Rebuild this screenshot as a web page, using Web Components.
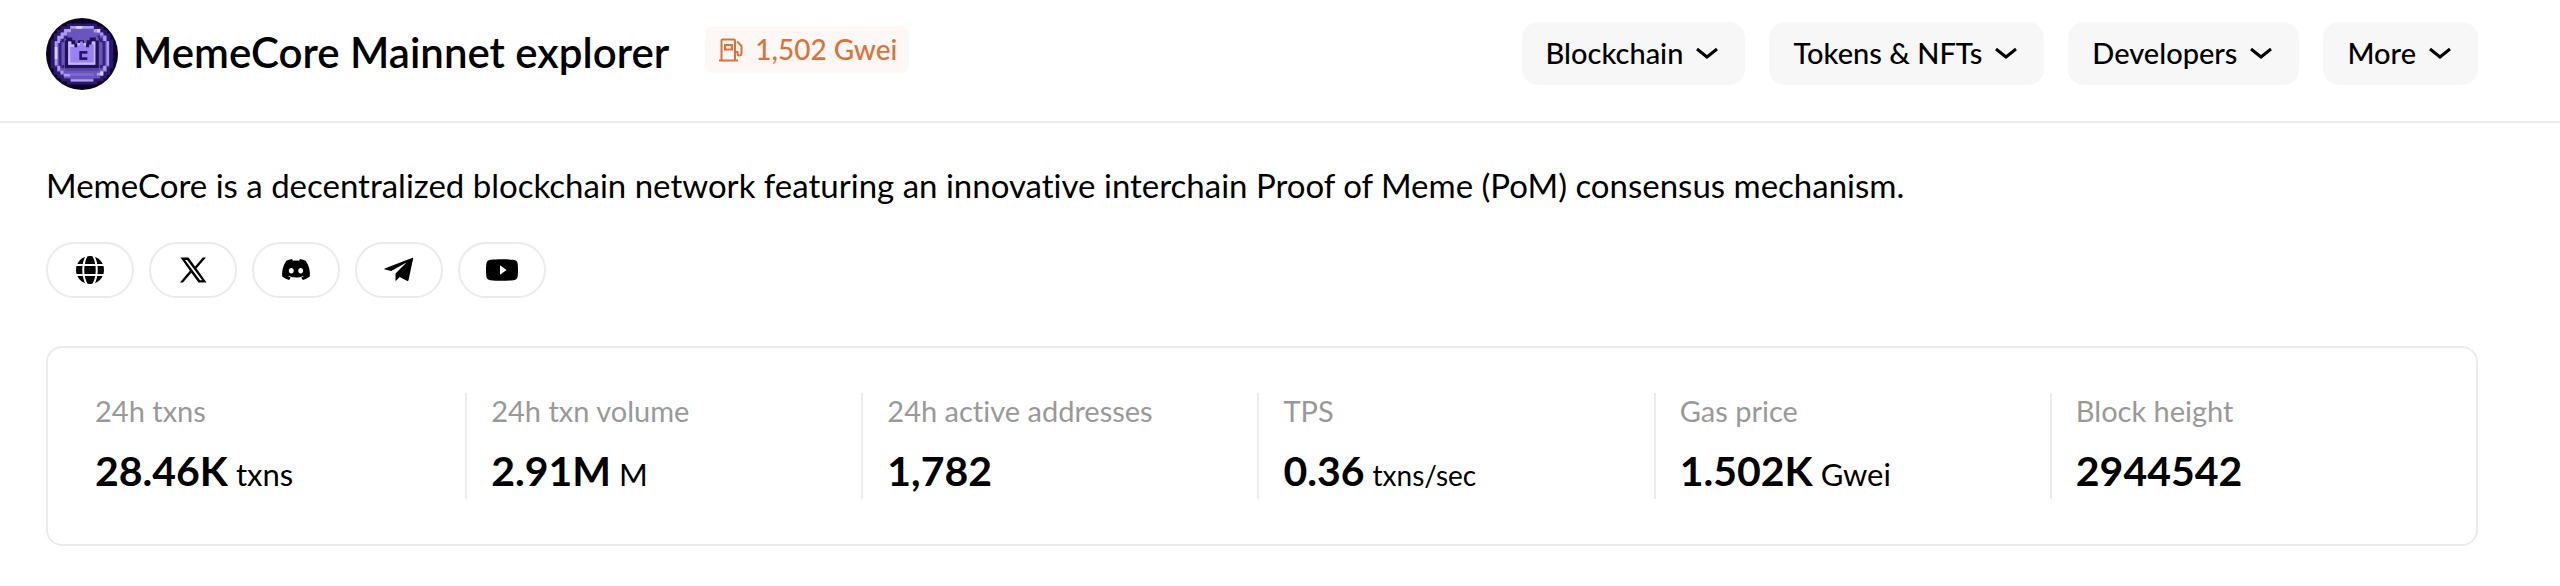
<!DOCTYPE html>
<html lang="en">
<head>
<meta charset="utf-8">
<meta name="viewport" content="width=device-width, initial-scale=1">
<title>MemeCore Mainnet explorer</title>
<style>
  body {
    margin: 0;
    background: #fff;
    color: #000;
    font-family: Lato, "Liberation Sans", sans-serif;
    font-variant-ligatures: none;
  }
</style>
</head>
<body>

<explorer-header>
  <chain-logo slot="brand"></chain-logo>
  <span slot="title">MemeCore Mainnet explorer</span>
  <gas-badge slot="brand-extra">1,502 Gwei</gas-badge>
  <nav-menu>Blockchain</nav-menu>
  <nav-menu>Tokens &amp; NFTs</nav-menu>
  <nav-menu>Developers</nav-menu>
  <nav-menu>More</nav-menu>
</explorer-header>

<chain-overview>
  <span slot="description">MemeCore is a decentralized blockchain network featuring an innovative interchain Proof of Meme (PoM) consensus mechanism.</span>
  <social-link slot="links" icon="globe" label="Website"></social-link>
  <social-link slot="links" icon="x" label="X"></social-link>
  <social-link slot="links" icon="discord" label="Discord"></social-link>
  <social-link slot="links" icon="telegram" label="Telegram"></social-link>
  <social-link slot="links" icon="youtube" label="YouTube"></social-link>
  <stat-card label="24h txns" unit="txns">28.46K</stat-card>
  <stat-card label="24h txn volume" unit="M">2.91M</stat-card>
  <stat-card label="24h active addresses">1,782</stat-card>
  <stat-card label="TPS" unit="txns/sec" small-unit>0.36</stat-card>
  <stat-card label="Gas price" unit="Gwei">1.502K</stat-card>
  <stat-card label="Block height">2944542</stat-card>
</chain-overview>

<script>
class ExplorerHeader extends HTMLElement {
  constructor() {
    super();
    this.attachShadow({ mode: "open" });
  }

  connectedCallback() {
    this.shadowRoot.innerHTML = /* html */`
      <style>
        :host { display: block; border-bottom: 2px solid #ebebeb; }

        header {
          display: flex;
          flex-wrap: wrap;
          align-items: center;
          justify-content: space-between;
          gap: 16px;
          padding: 18px 82px 31px 46px;
        }

        .brand { display: flex; align-items: center; gap: 15px; }

        h1 {
          margin: 0 21px 0 0;
          padding-bottom: 4px;
          font-size: 42px;
          line-height: 56px;
          font-weight: 600;
        }

        nav { display: flex; flex-wrap: wrap; gap: 24px; padding-bottom: 2px; }
      </style>

      <header>
        <div class="brand">
          <slot name="brand"></slot>
          <h1><slot name="title"></slot></h1>
          <slot name="brand-extra"></slot>
        </div>
        <nav aria-label="Explorer"><slot></slot></nav>
      </header>
    `;
  }
}

class ChainLogo extends HTMLElement {
  constructor() {
    super();
    this.attachShadow({ mode: "open" });
  }

  connectedCallback() {
    this.shadowRoot.innerHTML = /* html */`
      <style>
        :host { display: block; flex: none; }
        svg { display: block; width: 72px; height: 72px; }
      </style>

      <svg viewBox="18 24 214 214" aria-hidden="true">
        <circle cx="125" cy="131" r="107" fill="#0b031f"/>
        <!-- coin -->
        <path fill="#2b1970" d="M80 40h90v9h19v10h10v10h10v19h9v86h-9v19h-10v10h-10v10h-19v9H80v-9H61v-10H51v-10H41v-19h-9V88h9V69h10V59h10V49h19z"/>
        <path fill="#6956bd" d="M90 49h70v9h19v10h10v10h10v15h7v76h-7v15h-10v10h-10v10h-19v9H90v-9H71v-10H61v-10H51v-15h-7V93h7V78h10V68h10V58h19z"/>
        <path fill="#34227b" d="M72 76h10v10H72v10h-8v68h8v9h-8v-5h-8V92h8v-8h8zM170 76h8v8h8v8h8v76h-8v5h-8v-9h8V96h-8z"/>
        <path fill="#ad9ceb" d="M90 48h70v8H90zM72 57h20v9H80v10H70v10H60v12h-8v66h-8V93h8V77h10V67h10zM160 57h19v10h9v9h-9v-9h-19zM188 76h9v16h-9zM198 93h7v72h-7zM188 166h9v15h-9zM179 181h9v14h-19v-8h10zM52 166h8v15h-8zM61 181h9v9h-9zM71 190h19v8H71zM92 206h66v7H92z"/>
        <path fill="#d9cdfc" d="M108 48h18v8h-18zM170 57h9v10h-9zM44 110h8v36h-8zM179 184h9v11h-9z"/>
        <!-- crown -->
        <path fill="#211256" d="M78 82h18v8h9v10h8V90h18v10h8V90h9v-8h18v9h9v82H74V91h4z"/>
        <path fill="#9b82f3" d="M84 94h9v9h9v8h9v-8h8v-9h9v9h9v8h9v-8h8v-9h9v69H84z"/>
        <path fill="#c8b8ff" d="M84 94h9v9h9v7H90v46h70v-53h-6v-9h11v69H84zM111 98h8v8h-8zM129 98h8v8h-8z"/>
        <path fill="#281766" d="M117 122h24v8h-16v11h16v8h-24z"/>
        <path fill="#5642a5" d="M76 173h98v8H76z"/>
        <path fill="#7d69d1" d="M90 188h70v8H90z"/>
      </svg>
    `;
  }
}

class GasBadge extends HTMLElement {
  constructor() {
    super();
    this.attachShadow({ mode: "open" });
  }

  connectedCallback() {
    this.shadowRoot.innerHTML = /* html */`
      <style>
        :host { display: block; align-self: flex-start; padding-top: 8px; }

        .badge {
          display: flex;
          align-items: center;
          gap: 10px;
          padding: 0 12px;
          border-radius: 8px;
          background: #fdf8f5;
          color: #d9733e;
          font-size: 28px;
          font-weight: 500;
          line-height: 47px;
          white-space: nowrap;
        }

        svg { width: 28px; height: 28px; }
      </style>

      <div class="badge">
        <svg viewBox="0 0 28 28" fill="none" stroke="currentColor" stroke-width="2" aria-hidden="true">
          <path d="M2 24.500h19M4.500 24V4.500a1 1 0 0 1 1-1H17a1 1 0 0 1 1 1V24M8 9h7v4.500H8zM18 16h2.500v1.500a2 2 0 0 0 4 0V10L20 5.500"/>
        </svg>
        <slot></slot>
      </div>
    `;
  }
}

class NavMenu extends HTMLElement {
  constructor() {
    super();
    this.attachShadow({ mode: "open" });
  }

  connectedCallback() {
    this.shadowRoot.innerHTML = /* html */`
      <style>
        :host { display: block; }

        button {
          display: flex;
          align-items: center;
          gap: 12px;
          padding: 0 26px 2px 24px;
          border: 0;
          border-radius: 16px;
          background: #f7f7f7;
          color: inherit;
          font-family: inherit;
          font-size: 29px;
          font-weight: 500;
          line-height: 61px;
          cursor: pointer;
        }

        button:hover { background: #efefef; }
        svg { width: 24px; height: 24px; }
      </style>

      <button type="button" aria-haspopup="true">
        <slot></slot>
        <svg viewBox="0 0 24 24" fill="none" stroke="currentColor" stroke-width="3" aria-hidden="true">
          <path d="M2 9l10 8 10-8"/>
        </svg>
      </button>
    `;
  }
}

class ChainOverview extends HTMLElement {
  constructor() {
    super();
    this.attachShadow({ mode: "open" });
  }

  connectedCallback() {
    this.shadowRoot.innerHTML = /* html */`
      <style>
        :host { display: block; padding: 38px 82px 40px 46px; }

        p { margin: 0 0 33px; font-size: 33px; line-height: 48px; }

        .links { display: flex; flex-wrap: wrap; gap: 15px; margin-bottom: 48px; }

        .stats {
          display: grid;
          grid-template-columns: repeat(6, 1fr);
          padding: 45px 30px 45px 21px;
          border: 2px solid #ebebeb;
          border-radius: 16px;
        }

        @media (max-width: 1500px) {
          .stats { grid-template-columns: repeat(auto-fit, minmax(320px, 1fr)); row-gap: 32px; }
        }
      </style>

      <p><slot name="description"></slot></p>
      <div class="links"><slot name="links"></slot></div>
      <div class="stats"><slot></slot></div>
    `;
  }
}

const SOCIAL_ICONS = {
  globe: `
    <circle cx="16" cy="16" r="14"/>
    <path d="M1 11h30M1 21h30M13 1c-5 9-5 21 0 30M19 1c5 9 5 21 0 30" fill="none" stroke="#fff" stroke-width="2"/>`,
  x: `
    <path fill-rule="evenodd" d="M3.500 3.500h8l6.600 8.900 7.700-8.900h3.100l-9.400 11L29.500 28.500h-8l-7.200-9.700-8.300 9.700H2.900l10-11.700zM8 5.900l15 20.300h2.200L10.200 5.900z"/>`,
  discord: `
    <path fill-rule="evenodd" d="M25.700 6.700A22 22 0 0 0 20 5l-.9 1.700a20 20 0 0 0-6.200 0L12 5a22 22 0 0 0-5.700 1.700C2.700 12 1.700 17.300 2.200 22.500A22 22 0 0 0 9.200 26l1.500-2.500-2.300-1.100.6-.5c4.500 2 9.500 2 14 0l.6.500-2.300 1.100L22.800 26a22 22 0 0 0 7-3.500c.6-6-1-11.200-4.100-15.800zM11.300 19.500c-1.400 0-2.500-1.300-2.500-2.800s1.100-2.800 2.500-2.800 2.500 1.300 2.500 2.800-1.100 2.800-2.500 2.800zm9.400 0c-1.400 0-2.500-1.300-2.500-2.800s1.100-2.800 2.500-2.800 2.500 1.300 2.500 2.800-1.100 2.800-2.500 2.800z"/>`,
  telegram: `
    <path d="M29.500 3.700 1.700 14.500c-.5.200-.5.900.1 1.100l6.400 1.500L23.500 8.500 12.500 19.500v7.700l4.200-4.200 7.600 3.900c.6.300 1.100 0 1.200-.6L30.200 4.300c.1-.4-.3-.7-.7-.6z"/>`,
  youtube: `
    <path fill-rule="evenodd" d="M4.500 5.800c6-.7 17-.7 23 0 2.600.3 4 1.800 4.200 4.200.4 4 .4 8 0 12-.2 2.400-1.600 3.900-4.200 4.200-6 .7-17 .7-23 0C1.900 25.900.5 24.400.3 22c-.4-4-.4-8 0-12 .2-2.400 1.600-3.900 4.200-4.200zM14 11.200v9.600l6.500-4.800z"/>`
};

class SocialLink extends HTMLElement {
  constructor() {
    super();
    this.attachShadow({ mode: "open" });
  }

  connectedCallback() {
    this.shadowRoot.innerHTML = /* html */`
      <style>
        :host { display: block; }

        a {
          display: flex;
          align-items: center;
          justify-content: center;
          width: 84px;
          height: 52px;
          border: 2px solid #ebebeb;
          border-radius: 28px;
          color: #000;
        }

        a:hover { background: #f7f7f7; }
        svg { width: 32px; height: 32px; }
      </style>

      <a href="#" aria-label="${this.getAttribute("label")}">
        <svg viewBox="0 0 32 32" fill="currentColor" aria-hidden="true">${SOCIAL_ICONS[this.getAttribute("icon")]}</svg>
      </a>
    `;
  }
}

class StatCard extends HTMLElement {
  constructor() {
    super();
    this.attachShadow({ mode: "open" });
  }

  connectedCallback() {
    const unit = this.getAttribute("unit");

    this.shadowRoot.innerHTML = /* html */`
      <style>
        :host {
          display: block;
          padding: 0 24px 2px;
          border-left: 2px solid #ebebeb;
        }

        :host(:first-of-type) { border-left-color: transparent; }

        .label {
          margin-bottom: 16px;
          color: #999;
          font-size: 29px;
          line-height: 36px;
        }

        .value {
          display: flex;
          align-items: baseline;
          gap: 8px;
          font-size: 41px;
          line-height: 52px;
          font-weight: 700;
        }

        .unit { font-size: 31px; line-height: 32px; font-weight: 400; }
        :host([small-unit]) .unit { font-size: 28px; }
      </style>

      <div class="label">${this.getAttribute("label")}</div>
      <div class="value">
        <slot></slot>
        ${unit ? `<span class="unit">${unit}</span>` : ""}
      </div>
    `;
  }
}

customElements.define("explorer-header", ExplorerHeader);
customElements.define("chain-logo", ChainLogo);
customElements.define("gas-badge", GasBadge);
customElements.define("nav-menu", NavMenu);
customElements.define("chain-overview", ChainOverview);
customElements.define("social-link", SocialLink);
customElements.define("stat-card", StatCard);
</script>
</body>
</html>
